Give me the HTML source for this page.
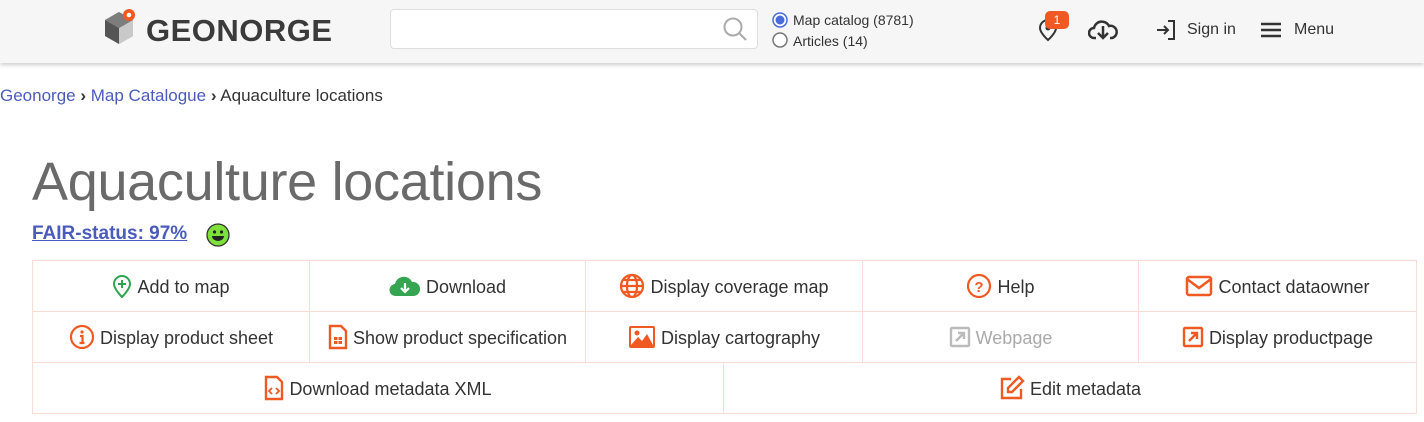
<!DOCTYPE html>
<html><head><meta charset="utf-8"><style>
*{box-sizing:border-box;margin:0;padding:0}
body{width:1424px;height:422px;background:#fff;font-family:"Liberation Sans",sans-serif;color:#333;position:relative;overflow:hidden}
.hdr{position:absolute;left:0;top:0;width:1424px;height:63px;background:#f6f6f6;box-shadow:0 2px 4px rgba(0,0,0,.2)}
.abs{position:absolute}
.logo{left:146px;top:13px;font-size:31px;font-weight:bold;color:#3b3b3b;letter-spacing:0.5px}
.search{left:390px;top:9px;width:368px;height:40px;background:#fff;border:1px solid #ddd;border-radius:4px}
.radio{font-size:14px;color:#333}
.hi{font-size:16px;color:#333}
.bc{left:0;top:86px;font-size:17px}
.bc a{color:#4a5bbd;text-decoration:none}
h1{position:absolute;left:32px;top:151px;font-size:54px;font-weight:normal;color:#6a6a6a;letter-spacing:-0.3px}
.fair{left:32px;top:223px;font-size:19px;font-weight:bold;color:#4a5bbd;text-decoration:underline}
table{position:absolute;left:32px;top:260px;width:1385px;border-collapse:collapse}
td{border:1px solid #f8ddd4;height:51px;padding-top:4px;text-align:center;font-size:18px;color:#333;vertical-align:middle}
td svg{vertical-align:middle;margin-right:5px;position:relative;top:-2px}
</style></head><body>
<div class="hdr"></div>
<svg class="abs" style="left:104px;top:8px" width="34" height="38" viewBox="0 0 34 38">
<polygon points="1,12 15,4 29,12 29,28 15,36 1,28" fill="#9a9a9a"/>
<polygon points="15,20 29,12 29,28 15,36" fill="#c9c9c9"/>
<polygon points="1,12 15,20 15,36 1,28" fill="#555"/>
<polygon points="1,12 15,4 29,12 15,20" fill="#7d7d7d"/>
<circle cx="25" cy="7" r="6" fill="#f05a22"/><circle cx="25" cy="7" r="2.3" fill="#fff"/>
</svg>
<div class="abs logo">GEONORGE</div>
<div class="abs search"></div>
<svg class="abs" style="left:722px;top:16px" width="26" height="26" viewBox="0 0 26 26"><circle cx="11" cy="11" r="8.5" fill="none" stroke="#aaa" stroke-width="2"/><line x1="17" y1="17" x2="24" y2="24" stroke="#aaa" stroke-width="2"/></svg>
<svg class="abs" style="left:771px;top:12px" width="18" height="36"><circle cx="9" cy="8" r="7" fill="#fff" stroke="#4a6bdc" stroke-width="1.5"/><circle cx="9" cy="8" r="4.5" fill="#4a6bdc"/><circle cx="9" cy="28" r="7" fill="#fff" stroke="#777" stroke-width="1.5"/></svg>
<div class="abs radio" style="left:793px;top:12px">Map catalog (8781)</div>
<div class="abs radio" style="left:793px;top:33px">Articles (14)</div>
<svg class="abs" style="left:1036px;top:18px" width="24" height="24" viewBox="0 0 24 24"><path d="M12 22s-8-7-8-12a8 8 0 0 1 16 0c0 5-8 12-8 12z" fill="none" stroke="#333" stroke-width="2"/><circle cx="12" cy="10" r="2.5" fill="#333"/></svg>
<div class="abs" style="left:1045px;top:11px;width:24px;height:18px;background:#f05a22;border-radius:5px;color:#fff;font-size:12px;text-align:center;line-height:18px">1</div>
<svg class="abs" style="left:1088px;top:18px" width="30" height="24" viewBox="0 0 30 24"><path d="M8 20h-2a5 5 0 0 1 0-10 8 8 0 0 1 15-2 6 6 0 0 1 3 12h-2" fill="none" stroke="#333" stroke-width="2.5"/><path d="M15 8v11M10 15l5 5 5-5" fill="none" stroke="#333" stroke-width="2.5"/></svg>
<svg class="abs" style="left:1155px;top:19px" width="22" height="22" viewBox="0 0 22 22"><path d="M13 2h6v18h-6M2 11h11M9 7l4 4-4 4" fill="none" stroke="#333" stroke-width="2"/></svg>
<div class="abs hi" style="left:1187px;top:21px">Sign in</div>
<svg class="abs" style="left:1260px;top:21px" width="22" height="18"><path d="M1 3h20M1 9h20M1 15h20" stroke="#333" stroke-width="2.4"/></svg>
<div class="abs hi" style="left:1294px;top:21px">Menu</div>
<div class="abs bc"><a>Geonorge</a> <b style="font-size:17px">›</b> <a>Map Catalogue</a> <b style="font-size:17px">›</b> Aquaculture locations</div>
<h1>Aquaculture locations</h1>
<div class="abs fair">FAIR-status: 97%</div>
<svg class="abs" style="left:206px;top:223px" width="24" height="24" viewBox="0 0 24 24"><circle cx="12" cy="12" r="11" fill="#7ee03a" stroke="#333" stroke-width="1.3"/><circle cx="8.5" cy="9" r="1.6" fill="#222"/><circle cx="15.5" cy="9" r="1.6" fill="#222"/><path d="M6 13h12a6 5 0 0 1-12 0z" fill="#222"/></svg>
<table>
<tr>
<td style="width:277px"><svg width="20" height="24" viewBox="0 0 20 24"><path d="M10 23s-8-8-8-13a8 8 0 0 1 16 0c0 5-8 13-8 13z" fill="none" stroke="#2ea44f" stroke-width="2"/><path d="M10 6v8M6 10h8" stroke="#2ea44f" stroke-width="2"/></svg>Add to map</td>
<td style="width:276px"><svg width="32" height="22" viewBox="0 0 32 22"><path d="M7 21a6 6 0 0 1-1-12 9 9 0 0 1 17-2 7 7 0 0 1 2 14z" fill="#36a552"/><path d="M16 8v9M12 13l4 4 4-4" stroke="#fff" stroke-width="2.2" fill="none"/></svg>Download</td>
<td style="width:277px"><svg width="26" height="26" viewBox="0 0 26 26" fill="none" stroke="#f05a22" stroke-width="2.2"><circle cx="13" cy="13" r="11"/><ellipse cx="13" cy="13" rx="5" ry="11"/><path d="M2 13h22M4 7h18M4 19h18"/></svg>Display coverage map</td>
<td style="width:276px"><svg width="26" height="26" viewBox="0 0 26 26"><circle cx="13" cy="13" r="11" fill="none" stroke="#f05a22" stroke-width="2.2"/><text x="13" y="19" font-size="15" font-weight="bold" text-anchor="middle" fill="#f05a22" font-family="Liberation Sans">?</text></svg>Help</td>
<td><svg width="28" height="22" viewBox="0 0 28 22" fill="none" stroke="#f05a22" stroke-width="2.5"><rect x="2" y="2" width="24" height="18" rx="2"/><path d="M2 4l12 9 12-9"/></svg>Contact dataowner</td>
</tr>
<tr>
<td><svg width="26" height="26" viewBox="0 0 26 26"><circle cx="13" cy="13" r="11" fill="none" stroke="#f05a22" stroke-width="2.2"/><circle cx="13" cy="8" r="1.6" fill="#f05a22"/><path d="M11 12h2.5v7M10.5 19h5" stroke="#f05a22" stroke-width="2.2" fill="none"/></svg>Display product sheet</td>
<td><svg width="20" height="26" viewBox="0 0 20 26"><path d="M2 2h11l5 5v17H2z" fill="none" stroke="#f05a22" stroke-width="2.4"/><rect x="6" y="13" width="8" height="7" fill="#f05a22"/><path d="M10 13v7M6 16.5h8" stroke="#fff" stroke-width="1"/></svg>Show product specification</td>
<td><svg width="28" height="24" viewBox="0 0 28 24"><rect x="1" y="1" width="26" height="22" rx="2" fill="#f05a22"/><rect x="3" y="3" width="22" height="17" fill="#fff"/><circle cx="9" cy="8" r="2.5" fill="#f05a22"/><path d="M3 20l7-8 4 4 5-7 6 11z" fill="#f05a22"/></svg>Display cartography</td>
<td style="color:#aaa"><svg width="22" height="22" viewBox="0 0 22 22" fill="none" stroke="#bbb" stroke-width="2.4"><rect x="2" y="2" width="18" height="18" rx="1"/><path d="M7 15l8-8M9 7h6v6"/></svg>Webpage</td>
<td><svg width="22" height="22" viewBox="0 0 22 22" fill="none" stroke="#f05a22" stroke-width="2.4"><rect x="2" y="2" width="18" height="18" rx="1"/><path d="M7 15l8-8M9 7h6v6"/></svg>Display productpage</td>
</tr>
<tr>
<td colspan="2" style="border-right:none"></td>
</tr>
</table>
<table style="top:362px">
<tr>
<td style="width:691px"><svg width="20" height="26" viewBox="0 0 20 26"><path d="M2 2h11l5 5v17H2z" fill="none" stroke="#f05a22" stroke-width="2.4"/><path d="M8 13l-3 3 3 3M12 13l3 3-3 3" stroke="#f05a22" stroke-width="1.8" fill="none"/></svg>Download metadata XML</td>
<td><svg width="26" height="26" viewBox="0 0 26 26" fill="none" stroke="#f05a22" stroke-width="2.4"><path d="M12 4H3v19h19v-9"/><path d="M20 2l4 4-11 11H9v-4z"/></svg>Edit metadata</td>
</tr>
</table>
</body></html>
